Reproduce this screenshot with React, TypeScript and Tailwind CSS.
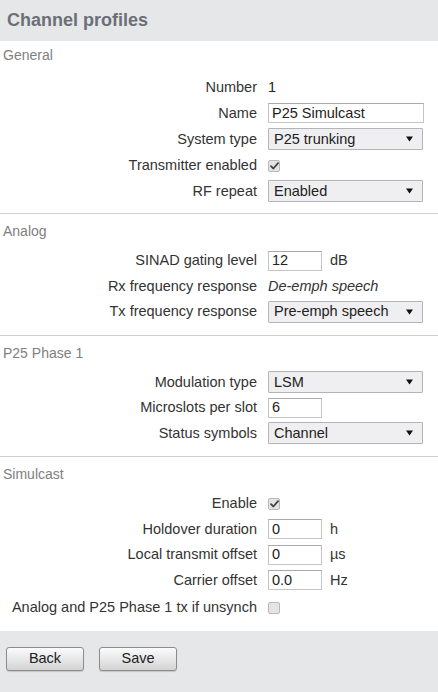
import { ReactNode } from 'react';

function Row({ label, children, className = '' }: { label: string; children?: ReactNode; className?: string }) {
  return (
    <div className={`flex items-center h-[25.5px] ${className}`}>
      <div className="w-[257px] shrink-0 text-right text-[#333] whitespace-nowrap">{label}</div>
      <div className="ml-[11px] flex items-center">{children}</div>
    </div>
  );
}

function Select({ value }: { value: string }) {
  return (
    <div className="w-[155px] h-[22px] flex items-center justify-between pl-[5px] pr-[9px] bg-[#efeff1] border border-[#b4b4b8] rounded-[1px] text-[#222]">
      <span>{value}</span>
      <svg width="7" height="6" viewBox="0 0 7 6">
        <path d="M0 0.5 L7 0.5 L3.5 5.5 Z" fill="#111" />
      </svg>
    </div>
  );
}

function TextInput({ value, wide = false }: { value: string; wide?: boolean }) {
  return (
    <div
      className={`${wide ? 'w-[156px]' : 'w-[54px]'} h-[20px] flex items-center pl-[3px] bg-white border border-[#c4c4c4] border-t-[#a9a9a9] text-[#222]`}
    >
      {value}
    </div>
  );
}

function Unit({ children }: { children: ReactNode }) {
  return <span className="ml-[8px] text-[#333]">{children}</span>;
}

function Check({ checked }: { checked: boolean }) {
  return (
    <div className="w-[12px] h-[12px] mt-[1px] rounded-[2px] border border-[#b9b9b9] bg-[#e4e4e4] flex items-center justify-center">
      {checked && (
        <svg width="9" height="8" viewBox="0 0 9 8">
          <path d="M1 4.2 L3.4 6.5 L8 1.2" stroke="#444" strokeWidth="1.8" fill="none" strokeLinecap="round" strokeLinejoin="round" />
        </svg>
      )}
    </div>
  );
}

function SectionTitle({ children, first = false }: { children: ReactNode; first?: boolean }) {
  return (
    <div
      className={`${first ? 'pt-[6px] pb-[11px]' : 'pt-[9px] pb-[9px]'} pl-[3px] text-[14px] leading-[16px] text-[#808080]`}
    >
      {children}
    </div>
  );
}

function Button({ children }: { children: ReactNode }) {
  return (
    <button className="w-[78px] h-[24px] rounded-[3px] border border-[#8c8c8c] bg-gradient-to-b from-[#fbfbfb] to-[#d4d4d4] text-[#222] shadow-[0_1px_1px_rgba(0,0,0,0.15)]">
      {children}
    </button>
  );
}

export default function App() {
  return (
    <div className="w-[438px] bg-white text-[14.5px] leading-[17px] font-['Liberation_Sans',Arial,sans-serif]">
      <div className="h-[41px] bg-[#e6e7e9] flex items-center pl-[7px]">
        <h1 className="text-[18px] font-bold text-[#6b6f76]">Channel profiles</h1>
      </div>

      <div className="pb-[9px] border-b border-[#cfcfcf]">
        <SectionTitle first>General</SectionTitle>
        <Row label="Number" className="h-[26px]">
          <span className="text-[#222]">1</span>
        </Row>
        <Row label="Name" className="h-[26px]">
          <TextInput value="P25 Simulcast" wide />
        </Row>
        <Row label="System type" className="h-[26px]">
          <Select value="P25 trunking" />
        </Row>
        <Row label="Transmitter enabled" className="h-[26px]">
          <Check checked />
        </Row>
        <Row label="RF repeat" className="h-[26px]">
          <Select value="Enabled" />
        </Row>
      </div>

      <div className="pb-[10px] border-b border-[#cfcfcf]">
        <SectionTitle>Analog</SectionTitle>
        <Row label="SINAD gating level">
          <TextInput value="12" />
          <Unit>dB</Unit>
        </Row>
        <Row label="Rx frequency response">
          <span className="italic text-[#333]">De-emph speech</span>
        </Row>
        <Row label="Tx frequency response">
          <Select value="Pre-emph speech" />
        </Row>
      </div>

      <div className="pb-[10px] border-b border-[#cfcfcf]">
        <SectionTitle>P25 Phase 1</SectionTitle>
        <Row label="Modulation type">
          <Select value="LSM" />
        </Row>
        <Row label="Microslots per slot">
          <TextInput value="6" />
        </Row>
        <Row label="Status symbols">
          <Select value="Channel" />
        </Row>
      </div>

      <div className="pb-[10px]">
        <SectionTitle>Simulcast</SectionTitle>
        <Row label="Enable">
          <Check checked />
        </Row>
        <Row label="Holdover duration">
          <TextInput value="0" />
          <Unit>h</Unit>
        </Row>
        <Row label="Local transmit offset">
          <TextInput value="0" />
          <Unit>µs</Unit>
        </Row>
        <Row label="Carrier offset">
          <TextInput value="0.0" />
          <Unit>Hz</Unit>
        </Row>
        <Row label="Analog and P25 Phase 1 tx if unsynch" className="mt-[2px]">
          <Check checked={false} />
        </Row>
      </div>

      <div className="h-[61px] bg-[#e6e7e9] pt-[16px] pl-[6px] flex items-start gap-[15px]">
        <Button>Back</Button>
        <Button>Save</Button>
      </div>
    </div>
  );
}
